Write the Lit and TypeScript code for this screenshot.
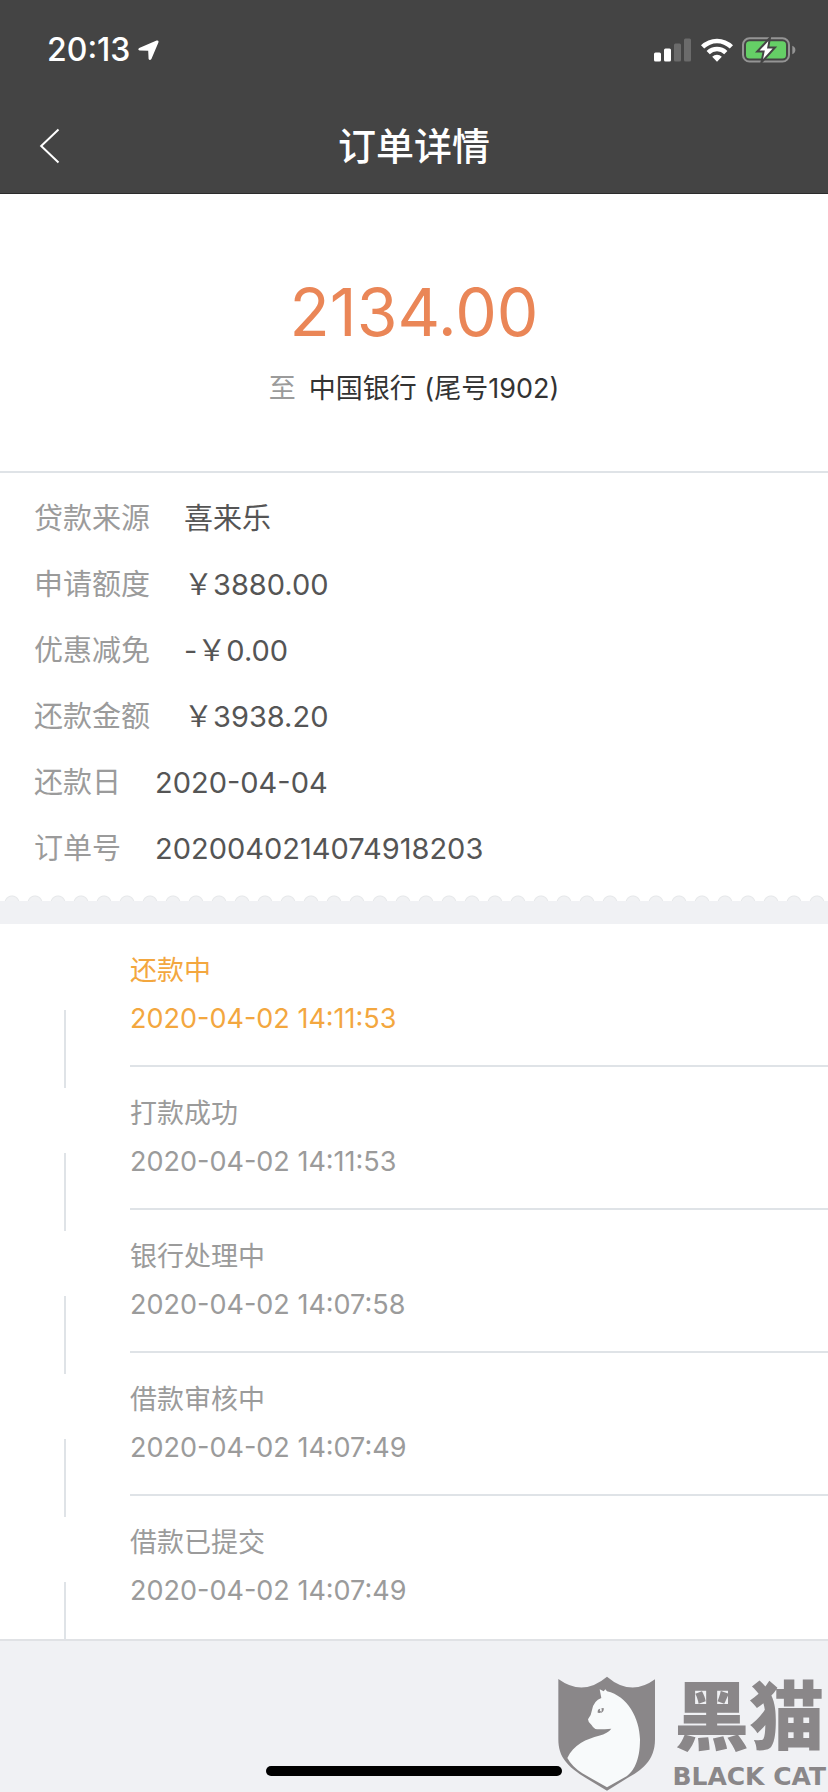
import { LitElement, html, css } from "lit";
import { customElement } from "lit/decorators.js";
import { classMap } from "lit/directives/class-map.js";

interface Detail {
  label: string;
  value: string;
}

interface Step {
  title: string;
  time: string;
}

const DETAILS: Detail[] = [
  { label: "贷款来源", value: "喜来乐" },
  { label: "申请额度", value: "￥3880.00" },
  { label: "优惠减免", value: "-￥0.00" },
  { label: "还款金额", value: "￥3938.20" },
  { label: "还款日", value: "2020-04-04" },
  { label: "订单号", value: "2020040214074918203" },
];

const STEPS: Step[] = [
  { title: "还款中", time: "2020-04-02 14:11:53" },
  { title: "打款成功", time: "2020-04-02 14:11:53" },
  { title: "银行处理中", time: "2020-04-02 14:07:58" },
  { title: "借款审核中", time: "2020-04-02 14:07:49" },
  { title: "借款已提交", time: "2020-04-02 14:07:49" },
];

@customElement("status-bar")
class StatusBar extends LitElement {
  static styles = css`
    :host {
      display: flex;
      align-items: center;
      justify-content: space-between;
      height: 100px;
      padding: 0 32px 0 47px;
      box-sizing: border-box;
      color: #fff;
    }
    .group {
      display: flex;
      align-items: center;
      gap: 9px;
    }
    .group.left {
      gap: 8px;
    }
    .clock {
      font-size: 32px;
      line-height: 40px;
      font-weight: 500;
    }
    svg {
      display: block;
    }
  `;

  render() {
    return html`
      <div class="group left">
        <span class="clock">20:13</span>
        <svg width="21" height="21" viewBox="0 0 21 21" aria-hidden="true">
          <path d="M1.2 8 18.6 .5Q21 0 20.4 2.4L13.4 19Q11.8 21.2 10.6 19L10.2 10.8 1.6 10.6Q-.8 9.6 1.2 8Z" fill="#fff" />
        </svg>
      </div>
      <div class="group">
        <svg width="38" height="24" viewBox="0 0 38 24" aria-hidden="true">
          <rect x="0" y="14.5" width="7" height="9" rx="1.5" fill="#fff" />
          <rect x="10" y="10.5" width="7" height="13" rx="1.5" fill="#fff" />
          <rect x="20" y="5.5" width="7" height="18" rx="1.5" fill="#6b6b6b" />
          <rect x="30" y=".5" width="7" height="23" rx="1.5" fill="#6b6b6b" />
        </svg>
        <svg width="32" height="24" viewBox="0 0 32 24" aria-hidden="true">
          <path d="M0 7.2A23 23 0 0 1 32 7.2L28.8 10.5A18.4 18.4 0 0 0 3.2 10.5Z" fill="#fff" />
          <path d="M5.6 13A15 15 0 0 1 26.4 13L23.2 16.2A10.4 10.4 0 0 0 8.8 16.2Z" fill="#fff" />
          <path d="M11.2 18.7A7 7 0 0 1 20.8 18.7L16 23.8Z" fill="#fff" />
        </svg>
        <svg width="54" height="26" viewBox="0 0 54 26" aria-hidden="true">
          <rect x="1" y="1.3" width="46" height="23.2" rx="6.5" fill="none" stroke="#949494" stroke-width="2" />
          <rect x="4" y="4.3" width="40" height="17.2" rx="3.5" fill="#65cf66" />
          <path d="M50.3 8.7Q53.4 10 53.4 12.9T50.3 17.3Z" fill="#949494" />
          <path d="M28 .8 15.2 14.6H21.6L19.4 25.4 33 10.4H26.2Z" fill="#fff" stroke="#444" stroke-width="2" />
        </svg>
      </div>
    `;
  }
}

@customElement("nav-bar")
class NavBar extends LitElement {
  static styles = css`
    :host {
      display: grid;
      grid-template-columns: 100px 1fr 100px;
      align-items: center;
      height: 94px;
      padding-bottom: 2px;
      box-sizing: border-box;
      border-bottom: 1px solid #2b2b2b;
      color: #fff;
    }
    .back {
      display: flex;
      align-items: center;
      height: 88px;
      padding: 0 0 0 39px;
      border: 0;
      background: none;
    }
    .title {
      margin: 0;
      font-size: 38px;
      line-height: 56px;
      font-weight: 500;
      text-align: center;
    }
  `;

  render() {
    return html`
      <button class="back" type="button" aria-label="返回">
        <svg width="21" height="36" viewBox="0 0 21 36" aria-hidden="true">
          <path d="M19.5 1.5 2.2 18 19.5 34.5" fill="none" stroke="#fff" stroke-width="2" />
        </svg>
      </button>
      <h1 class="title">订单详情</h1>
    `;
  }
}

@customElement("order-timeline")
class OrderTimeline extends LitElement {
  static styles = css`
    :host {
      display: block;
      background: #fff;
      border-bottom: 2px solid #e0e2e5;
    }
    .steps {
      margin: 0;
      padding: 0;
      list-style: none;
    }
    .step {
      display: grid;
      grid-template-columns: 66px 1fr;
      column-gap: 64px;
      height: 143px;
      color: #9b9b9b;
    }
    .rail {
      display: grid;
      grid-template-rows: 21px 65px 1fr;
      justify-items: end;
    }
    .line {
      width: 2px;
      background: #dfe3e7;
    }
    .line.tail {
      grid-row: 3;
    }
    .step:first-child .line.head {
      background: none;
    }
    .body {
      padding-top: 23px;
      border-bottom: 2px solid #dfe3e7;
    }
    .step:last-child .body {
      border-bottom: 0;
    }
    .name,
    .time {
      display: block;
      font-size: 27px;
      line-height: 48px;
    }
    .active {
      color: #f3a73f;
    }
  `;

  render() {
    return html`
      <ol class="steps">
        ${STEPS.map(
          (step, i) => html`
            <li class=${classMap({ step: true, active: i === 0 })}>
              <div class="rail">
                <span class="line head"></span>
                <span class="line tail"></span>
              </div>
              <div class="body">
                <span class="name">${step.title}</span>
                <time class="time">${step.time}</time>
              </div>
            </li>
          `
        )}
      </ol>
    `;
  }
}

@customElement("black-cat-mark")
class BlackCatMark extends LitElement {
  static styles = css`
    :host {
      display: flex;
      align-items: flex-end;
      gap: 16px;
      color: #8a8789;
    }
    .shield {
      display: block;
      flex: none;
    }
    .words {
      display: flex;
      flex-direction: column;
      align-items: center;
      white-space: nowrap;
    }
    .cn {
      font-size: 75px;
      line-height: 90px;
      font-weight: 900;
    }
    .en {
      font-family: "DejaVu Sans", sans-serif;
      font-size: 25px;
      line-height: 30px;
      font-weight: 700;
    }
  `;

  render() {
    return html`
      <svg class="shield" width="98" height="116" viewBox="93 140 294 348" aria-hidden="true">
        <path
          d="M94 149Q168 203 240 142Q312 203 384 150V330C384 396 342 424 300 447L240 484 178 447C122 412 94 384 94 330Z"
          fill="#8a8789"
        />
        <path
          d="M121 386C138 346 180 328 216 319Q243 312 253 298Q216 301 205 299Q197 293 193 286Q183 279 183 270Q193 258 195 242Q200 214 223 206L218 180 230 186 235 180 240 186C302 200 338 268 339 330C339 398 318 426 300 440L240 474 166 432Q135 412 121 386Z"
          fill="#f8fafb"
        />
        <path d="M212 250Q211 238 220 238L218 243 223 248 219 251ZM223 237 230 236Q232 246 222 251 227 243 223 237Z" fill="#8a8789" />
      </svg>
      <div class="words">
        <span class="cn">黑猫</span>
        <span class="en">BLACK CAT</span>
      </div>
    `;
  }
}

@customElement("app-root")
class AppRoot extends LitElement {
  static styles = css`
    :host {
      display: flex;
      flex-direction: column;
      position: relative;
      min-height: 100vh;
      overflow: hidden;
      background: #f0f1f4;
      font-family: Inter, "Noto Sans CJK SC", sans-serif;
    }
    .top {
      background: #444;
    }
    .summary {
      display: flex;
      flex-direction: column;
      align-items: center;
      padding: 78px 32px 62px;
      background: #fff;
      border-bottom: 2px solid #dfe3e7;
    }
    .amount {
      margin: 0;
      color: #ea8657;
      font-size: 66px;
      line-height: 80px;
    }
    .account {
      display: flex;
      align-items: center;
      gap: 13px;
      margin: 17px 0 0;
      color: #333;
      font-size: 27px;
      line-height: 40px;
    }
    .to {
      color: #9b9b9b;
    }
    .details {
      margin: 0;
      padding: 13px 34px;
      background: #fff;
    }
    .row {
      display: flex;
      gap: 34px;
      font-size: 29px;
      line-height: 66px;
    }
    .label {
      color: #9b9b9b;
    }
    .value {
      margin: 0;
      color: #555;
    }
    .tear {
      height: 6px;
      background: radial-gradient(circle at 12px 8px, #f1f2f4 6px, #e6e8ea 7px, #fff 8px) 0 0 / 23px 6px #fff;
    }
    .band {
      height: 23px;
    }
    .home {
      width: 296px;
      height: 10px;
      margin: auto auto 16px;
      border-radius: 5px;
      background: #000;
    }
    .mark {
      position: absolute;
      right: 2px;
      bottom: 0;
    }
  `;

  render() {
    return html`
      <header class="top">
        <status-bar></status-bar>
        <nav-bar></nav-bar>
      </header>
      <main>
        <section class="summary">
          <p class="amount">2134.00</p>
          <p class="account"><span class="to">至</span><span>中国银行 (尾号1902)</span></p>
        </section>
        <dl class="details">
          ${DETAILS.map(
            (d) => html`
              <div class="row">
                <dt class="label">${d.label}</dt>
                <dd class="value">${d.value}</dd>
              </div>
            `
          )}
        </dl>
        <div class="tear"></div>
        <div class="band"></div>
        <order-timeline></order-timeline>
      </main>
      <div class="home"></div>
      <black-cat-mark class="mark"></black-cat-mark>
    `;
  }
}
